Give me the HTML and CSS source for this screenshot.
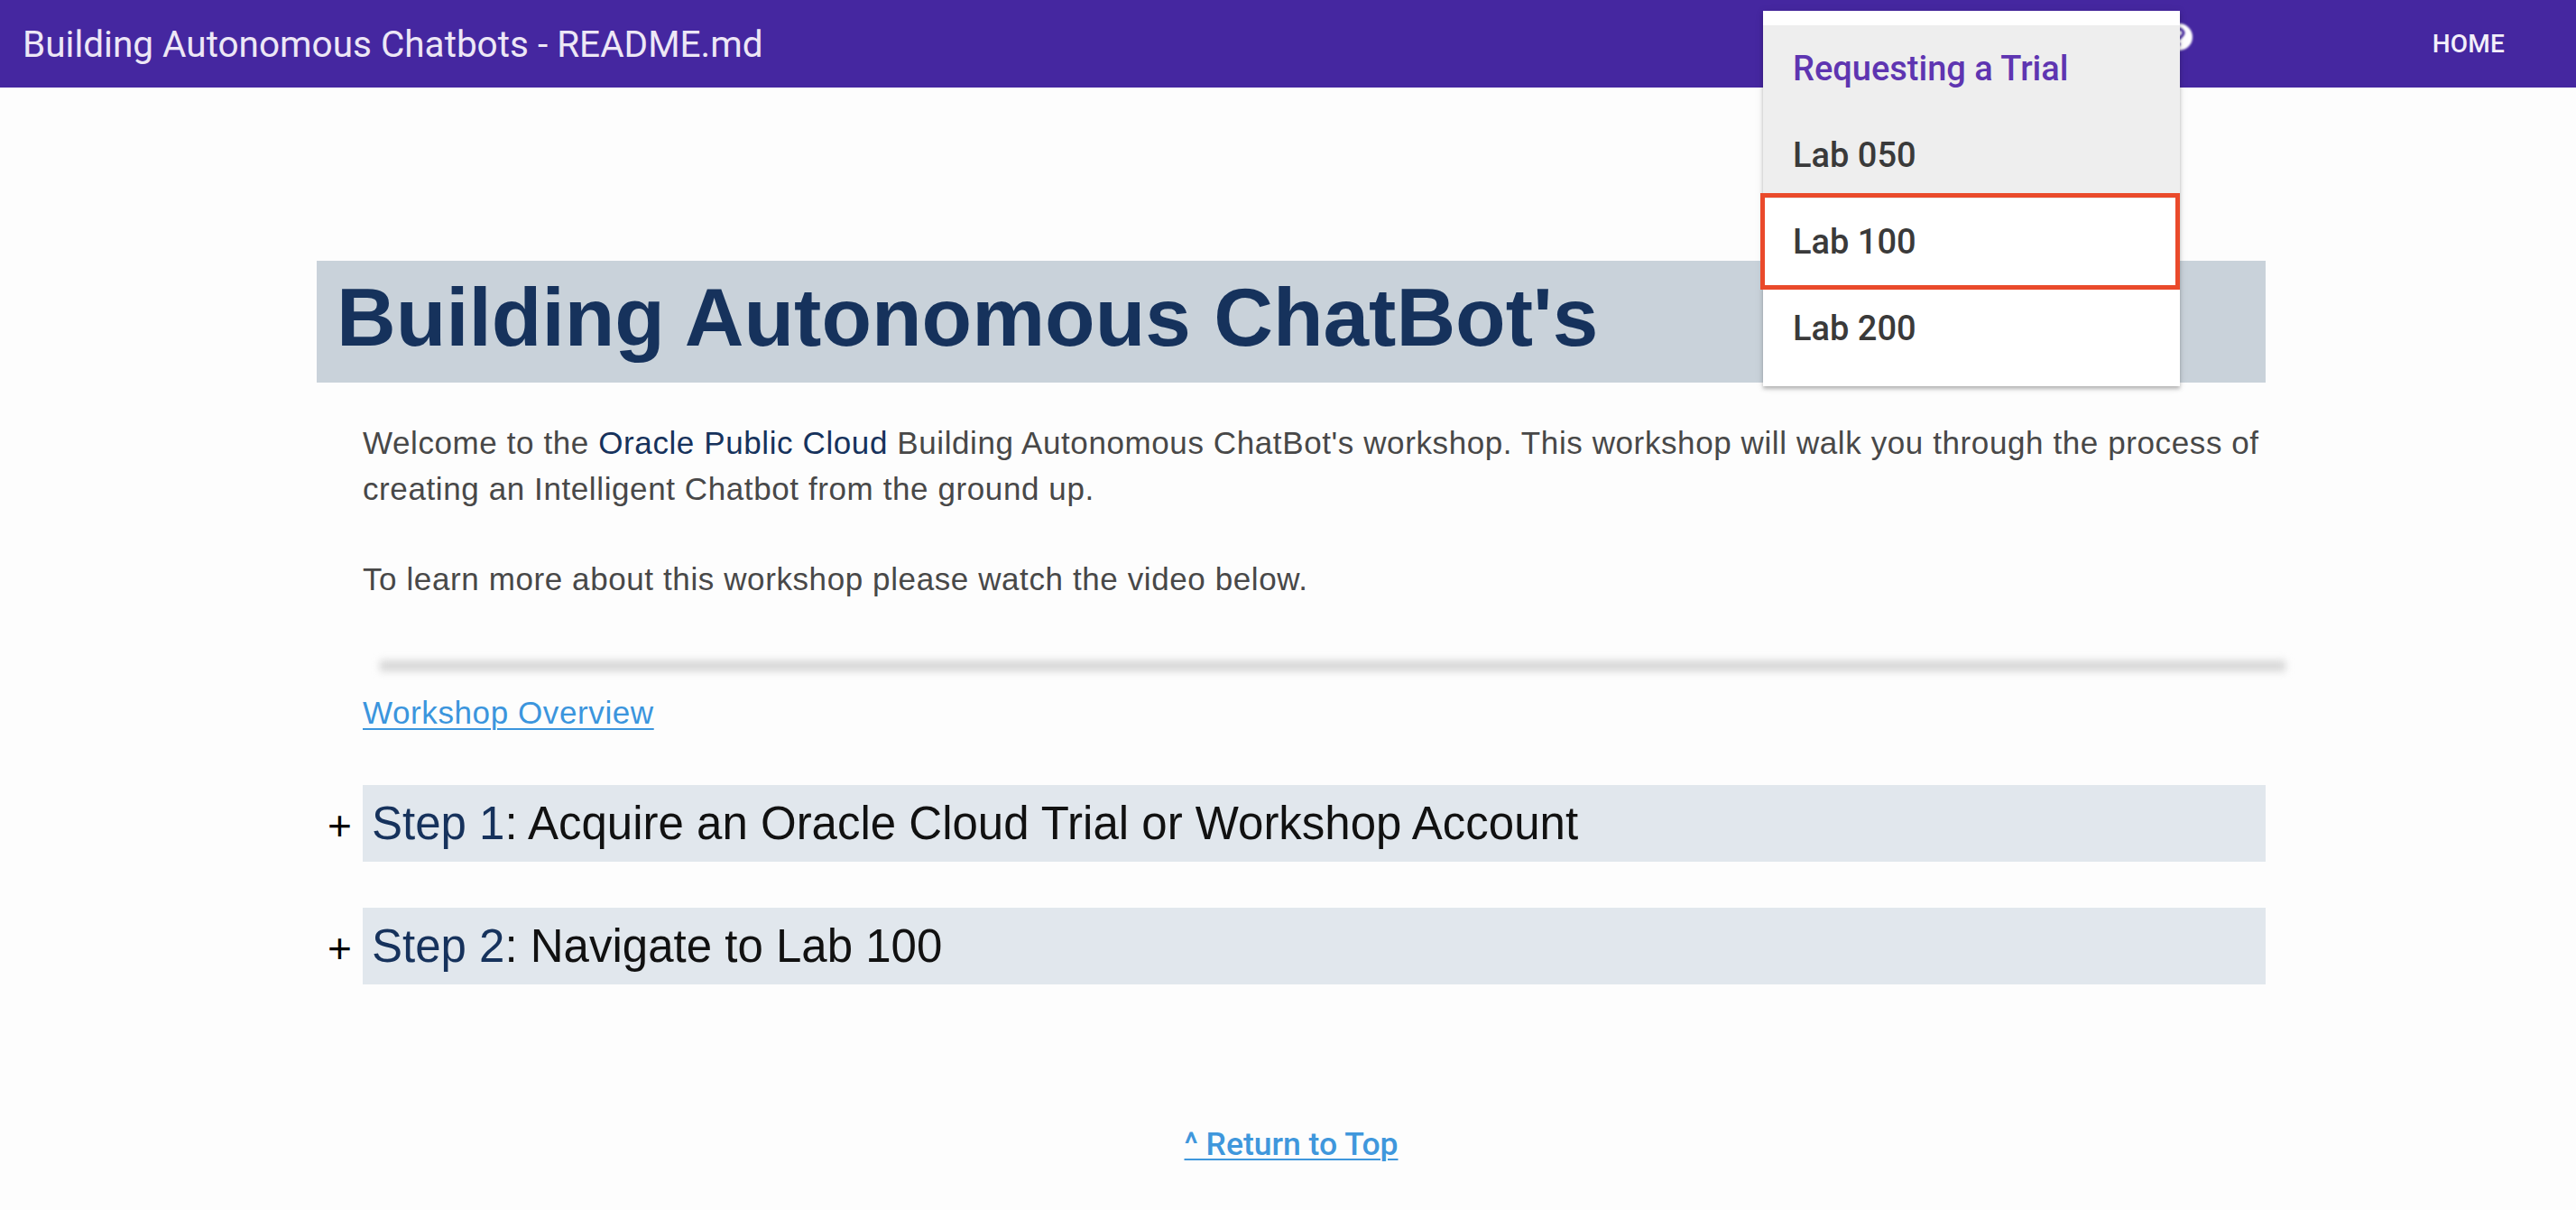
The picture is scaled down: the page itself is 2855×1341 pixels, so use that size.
FILE: index.html
```html
<!DOCTYPE html>
<html lang="en">
<head>
<meta charset="utf-8">
<title>Building Autonomous Chatbots - README.md</title>
<link rel="stylesheet" href="styles.css">
</head>
<body>
<header class="topbar">
  <div class="topbar-title">Building Autonomous Chatbots - README.md</div>
  <div class="topbar-spacer"></div>
  <svg class="help-icon" width="34" height="34" viewBox="0 0 34 34" aria-hidden="true">
    <circle cx="17" cy="17" r="15" fill="#ffffff"/>
    <path d="M12 13a5 5 0 0 1 10 0c0 3-5 4-5 7" fill="none" stroke="#4527a0" stroke-width="3"/>
    <circle cx="17" cy="25" r="1.8" fill="#4527a0"/>
  </svg>
  <nav class="topbar-nav"><a class="nav-link" href="#">HOME</a></nav>
</header>

<ul class="menu">
  <li class="menu-item menu-item-active">Requesting a Trial</li>
  <li class="menu-item menu-item-hover">Lab 050</li>
  <li class="menu-item">Lab 100</li>
  <li class="menu-item">Lab 200</li>
</ul>
<div class="highlight-box"></div>

<main class="page">
  <h1 class="page-title">Building Autonomous ChatBot's</h1>
  <div class="article">
    <p class="text">Welcome to the <span class="brand">Oracle Public Cloud</span> Building Autonomous ChatBot's workshop. This workshop will walk you through the process of creating an Intelligent Chatbot from the ground up.</p>
    <p class="text">To learn more about this workshop please watch the video below.</p>
    <div class="video-bar"></div>
    <p class="text link-line"><a class="link" href="#">Workshop Overview</a></p>

    <div class="step">
      <span class="step-toggle">+</span>
      <h2 class="step-box"><span class="step-num">Step 1</span>: Acquire an Oracle Cloud Trial or Workshop Account</h2>
    </div>
    <div class="step">
      <span class="step-toggle">+</span>
      <h2 class="step-box"><span class="step-num">Step 2</span>: Navigate to Lab 100</h2>
    </div>
  </div>
  <div class="return"><a class="return-link" href="#">^ Return to Top</a></div>
</main>
</body>
</html>
```

FILE: styles.css
```css
* { box-sizing: border-box; }

html, body {
  margin: 0;
  padding: 0;
}

body {
  background: #fdfdfd;
  font-family: "Liberation Sans", Arial, sans-serif;
  min-height: 1341px;
  position: relative;
}

.topbar {
  height: 97px;
  background: #4527a0;
  display: flex;
  align-items: center;
  padding: 0 79px 0 25px;
}

.topbar-title {
  font-family: Roboto, "Liberation Sans", sans-serif;
  font-size: 40.5px;
  font-weight: 400;
  color: #ede7f6;
  white-space: nowrap;
}

.topbar-spacer { flex: 1; }

.help-icon {
  position: absolute;
  left: 2398px;
  top: 24px;
  filter: blur(1px);
}

.topbar-nav { display: flex; }

.nav-link {
  font-family: Roboto, "Liberation Sans", sans-serif;
  font-size: 28px;
  font-weight: 500;
  color: #f3effa;
  text-decoration: none;
  letter-spacing: 0.2px;
}

.menu {
  position: absolute;
  left: 1954px;
  top: 12px;
  width: 462px;
  margin: 0;
  padding: 16px 0;
  list-style: none;
  background: #ffffff;
  box-shadow: 0 3px 4px rgba(0, 0, 0, 0.25), 0 1px 10px rgba(0, 0, 0, 0.08);
  z-index: 5;
}

.menu-item {
  height: 96px;
  display: flex;
  align-items: center;
  padding-left: 33px;
  font-family: Roboto, "Liberation Sans", sans-serif;
  font-size: 38px;
  font-weight: 500;
  color: #3a3a3a;
}

.menu-item-active {
  background: #eeeeee;
  color: #5e35b1;
}

.menu-item-hover { background: #eeeeee; }

.highlight-box {
  position: absolute;
  left: 1951px;
  top: 214px;
  width: 465px;
  height: 107px;
  border: 5px solid #ea4a2b;
  z-index: 6;
}

.page {
  width: 2160px;
  margin-left: 351px;
  padding-top: 192px;
}

.page-title {
  margin: 0;
  height: 135px;
  background: #c9d2da;
  padding: 0 0 10px 22px;
  font-family: "Liberation Sans", Arial, sans-serif;
  font-size: 91px;
  font-weight: 700;
  line-height: 125px;
  color: #16325c;
  white-space: nowrap;
}

.article {
  padding-left: 51px;
  padding-top: 41px;
}

.text {
  margin: 0 0 49px 0;
  font-size: 35px;
  letter-spacing: 0.6px;
  line-height: 51px;
  color: #484848;
}

.brand { color: #16325c; }

.video-bar {
  margin: 65px -22px 0 19px;
  height: 12px;
  background: #d6d6d6;
  filter: blur(4px);
}

.link-line { margin: 20px 0 55px 0; }

.link {
  color: #3b95dd;
  text-decoration: underline;
  text-underline-offset: 5px;
  text-decoration-thickness: 2px;
}

.step {
  display: flex;
  margin-left: -51px;
  margin-bottom: 51px;
  height: 85px;
}

.step-toggle {
  width: 51px;
  flex: none;
  text-align: center;
  font-size: 46px;
  line-height: 79px;
  padding-top: 6px;
  color: #000000;
}

.step-box {
  flex: 1;
  margin: 0;
  height: 85px;
  background: #e1e7ed;
  padding-left: 10px;
  font-size: 51px;
  font-weight: 400;
  line-height: 85px;
  color: #111111;
  white-space: nowrap;
}

.step-num { color: #16325c; }

.return {
  text-align: center;
  margin-top: 152px;
  line-height: 50px;
}

.return-link {
  font-family: Roboto, "Liberation Sans", sans-serif;
  font-size: 35.5px;
  font-weight: 500;
  color: #3f97dc;
  text-decoration: underline;
  text-underline-offset: 4px;
  text-decoration-thickness: 2px;
}
```
